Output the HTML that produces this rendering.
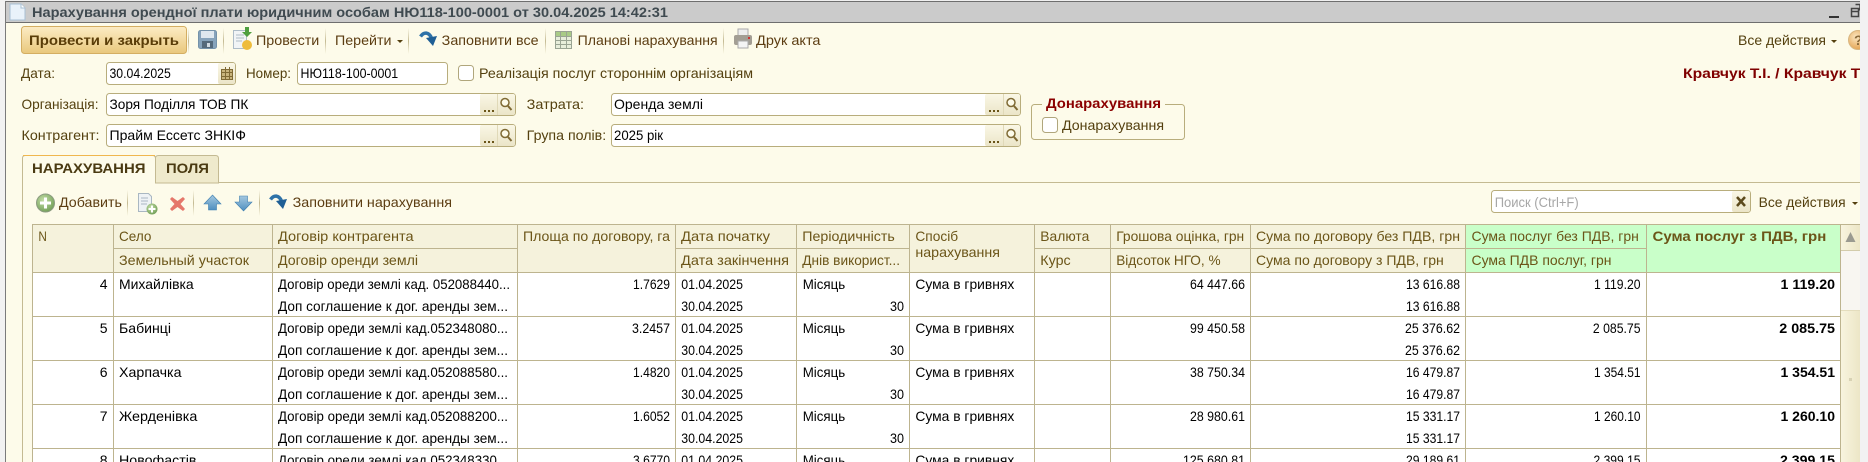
<!DOCTYPE html>
<html><head><meta charset="utf-8"><style>
html,body{margin:0;padding:0;background:#f2f2f2;width:1868px;height:462px;overflow:hidden}
svg{display:block}
text{font-family:"Liberation Sans","DejaVu Sans",sans-serif;font-size:14px;fill:#000;white-space:pre}
.l{fill:#54400f}.h{fill:#6b5518}.b{font-weight:bold}.tb{fill:#5c3d12}
</style></head><body>
<svg width="1868" height="462" viewBox="0 0 1868 462" xmlns="http://www.w3.org/2000/svg">
<defs>
<linearGradient id="btn" x1="0" y1="0" x2="0" y2="1"><stop offset="0" stop-color="#fcecc4"/><stop offset="1" stop-color="#e9c87c"/></linearGradient>
<linearGradient id="sep" x1="0" y1="0" x2="0" y2="1"><stop offset="0" stop-color="#c9c09a" stop-opacity="0"/><stop offset=".5" stop-color="#c4ba92"/><stop offset="1" stop-color="#c9c09a" stop-opacity="0"/></linearGradient>
<linearGradient id="ib" x1="0" y1="0" x2="0" y2="1"><stop offset="0" stop-color="#faf7e6"/><stop offset="1" stop-color="#ebe5c8"/></linearGradient>
<linearGradient id="sc" x1="0" y1="0" x2="1" y2="0"><stop offset="0" stop-color="#f8f4df"/><stop offset="1" stop-color="#ece6c6"/></linearGradient>
<linearGradient id="bl" x1="0" y1="0" x2="0" y2="1"><stop offset="0" stop-color="#a5c8df"/><stop offset="1" stop-color="#4f8fc0"/></linearGradient>
<radialGradient id="gr" cx=".4" cy=".35" r=".7"><stop offset="0" stop-color="#c5dfa8"/><stop offset="1" stop-color="#6f9d55"/></radialGradient>
<radialGradient id="og" cx=".4" cy=".35" r=".7"><stop offset="0" stop-color="#fbe6c0"/><stop offset="1" stop-color="#e3a14e"/></radialGradient>
<clipPath id="win"><rect x="0" y="0" width="1860" height="462"/></clipPath>
</defs>

<!-- window -->
<rect x="6" y="2" width="1854" height="460" fill="#fdfbea"/>
<rect x="5" y="0" width="1855" height="1" fill="#f0f0f0"/>
<rect x="5" y="1" width="1855" height="1" fill="#6e6e6e"/>
<rect x="6" y="2" width="1854" height="20" fill="#cbcbcb"/>
<rect x="6" y="22" width="1854" height="1" fill="#6e6e6e"/>
<rect x="5" y="1" width="1" height="461" fill="#7b7b7b"/>

<!-- title -->
<path d="M10 4h11l4 4v12H10z" fill="#e9f2fa" stroke="#a9c0d4"/>
<path d="M21 4v4h4" fill="#fff" stroke="#a9c0d4"/>
<text x="32" y="17" class="b" style="fill:#3f4a50" textLength="636" lengthAdjust="spacingAndGlyphs">Нарахування орендної плати юридичним особам НЮ118-100-0001 от 30.04.2025 14:42:31</text>
<rect x="1829" y="16" width="10" height="2" fill="#333"/>
<path d="M1855.500 4.500h4.500v6M1851.500 8.500h7v8h-7zM1851.500 11.500h7" fill="none" stroke="#444" stroke-width="1.500"/>

<!-- toolbar -->
<rect x="21.500" y="26.500" width="165" height="27" rx="3" fill="url(#btn)" stroke="#d4ae62"/>
<text x="29" y="45" class="b" style="fill:#5a3d08" textLength="150" lengthAdjust="spacingAndGlyphs">Провести и закрыть</text>
<rect x="188" y="28" width="1" height="26" fill="url(#sep)"/>
<rect x="223" y="28" width="1" height="26" fill="url(#sep)"/>
<rect x="325" y="28" width="1" height="26" fill="url(#sep)"/>
<rect x="408" y="28" width="1" height="26" fill="url(#sep)"/>
<rect x="545" y="28" width="1" height="26" fill="url(#sep)"/>
<rect x="723" y="28" width="1" height="26" fill="url(#sep)"/>
<!-- save -->
<rect x="198.500" y="30.500" width="18" height="18" rx="2" fill="#86a3bb" stroke="#7492a9"/>
<rect x="201" y="31" width="13" height="7" fill="#dfe8ef"/>
<rect x="202" y="41" width="11" height="7" fill="#54697a"/><rect x="207" y="43" width="3" height="4" fill="#cfd9e1"/>
<!-- post -->
<path d="M233.500 30.500h13v18h-13z" fill="#f1f4f6" stroke="#aebcc7"/>
<path d="M236 35h8M236 38h8M236 41h6" stroke="#aebcc7"/>
<ellipse cx="247" cy="45" rx="5" ry="5" fill="#eebc3c"/>
<path d="M245 27h4v5h3l-5 5-5-5h3z" fill="#4f9f3f"/>
<text x="256" y="45" class="tb" textLength="63.300" lengthAdjust="spacingAndGlyphs">Провести</text>
<text x="335" y="45" class="tb" textLength="56.500" lengthAdjust="spacingAndGlyphs">Перейти</text>
<path d="M397 40h6l-3 3z" fill="#54400f"/>
<!-- arrow -->
<path d="M420.500 36.500C424 31.500 429 32 431.500 38" fill="none" stroke="#2e72a8" stroke-width="3.500"/>
<path d="M426 38l11-2-4 10z" fill="#1f5f95"/>
<text x="441.700" y="45" class="tb" textLength="96.900" lengthAdjust="spacingAndGlyphs">Заповнити все</text>
<!-- table icon -->
<rect x="555.500" y="31.500" width="16" height="17" fill="#e8eedb" stroke="#9aa493"/>
<rect x="556" y="32" width="15" height="4" fill="#a9cb86"/>
<path d="M556 36.500h15M556 40.500h15M556 44.500h15M560.500 32v16M566.500 32v16" stroke="#9aa493"/>
<text x="577.700" y="45" class="tb" textLength="140" lengthAdjust="spacingAndGlyphs">Планові нарахування</text>
<!-- printer -->
<rect x="738" y="29" width="10" height="7" fill="#eee" stroke="#aaa"/>
<rect x="734" y="35" width="18" height="10" rx="2" fill="#a39e94"/>
<rect x="738" y="41" width="10" height="7" fill="#f4f4f4" stroke="#aaa"/>
<rect x="748" y="37" width="2" height="2" fill="#c33"/>
<text x="756" y="45" class="tb" textLength="64.500" lengthAdjust="spacingAndGlyphs">Друк акта</text>
<text x="1738" y="45" class="l" textLength="88" lengthAdjust="spacingAndGlyphs">Все действия</text>
<path d="M1831 40h6l-3 3z" fill="#54400f"/>
<g clip-path="url(#win)"><circle cx="1858" cy="40" r="9.500" fill="url(#og)" stroke="#d8b680"/>
<text x="1854" y="45" style="fill:#8a6a3a;font-weight:bold">?</text>
<text x="1683" y="78" class="b" style="fill:#7f0000" textLength="177.400" lengthAdjust="spacingAndGlyphs">Кравчук Т.І. / Кравчук Т</text></g>

<!-- form row 1 -->
<text x="21" y="78" class="l" textLength="34" lengthAdjust="spacingAndGlyphs">Дата:</text>
<rect x="106.500" y="62.500" width="129" height="22" rx="3" fill="#fff" stroke="#b8ad7c"/>
<rect x="218" y="63" width="17" height="21" rx="2" fill="url(#ib)"/>
<path d="M221.500 69.500h11v10h-11zM221.500 72.500h11M221.500 76.500h11M225.500 67v13M229.500 67v13" fill="#c8b47c" stroke="#7f6a34"/>
<text x="109.500" y="78" textLength="61.300" lengthAdjust="spacingAndGlyphs">30.04.2025</text>
<text x="246" y="78" class="l" textLength="45" lengthAdjust="spacingAndGlyphs">Номер:</text>
<rect x="297.500" y="62.500" width="150" height="22" rx="3" fill="#fff" stroke="#b8ad7c"/>
<text x="300.500" y="78" textLength="97.700" lengthAdjust="spacingAndGlyphs">НЮ118-100-0001</text>
<rect x="458.500" y="65.500" width="15" height="15" rx="3" fill="#fff" stroke="#b0a67c"/>
<text x="479" y="78" class="l" textLength="274" lengthAdjust="spacingAndGlyphs">Реалізація послуг стороннім організаціям</text>

<!-- org -->
<text x="21.500" y="109" class="l" textLength="77" lengthAdjust="spacingAndGlyphs">Організація:</text>
<rect x="106.500" y="93.500" width="409" height="22" rx="3" fill="#fff" stroke="#b8ad7c"/>
<rect x="480" y="94" width="35" height="21" rx="2" fill="url(#ib)"/><rect x="497" y="94" width="1" height="21" fill="#e0d9b8"/>
<path d="M484 111h2M488 111h2M492 111h2" stroke="#6b5518" stroke-width="2"/>
<circle cx="505" cy="102.500" r="4" fill="#fdfbea" stroke="#7f6a34" stroke-width="1.500"/><path d="M508 106l3.500 4" stroke="#7f6a34" stroke-width="2"/>
<text x="109.500" y="109" textLength="138.800" lengthAdjust="spacingAndGlyphs">Зоря Поділля ТОВ ПК</text>
<text x="526.700" y="109" class="l" textLength="57.300" lengthAdjust="spacingAndGlyphs">Затрата:</text>
<rect x="611.500" y="93.500" width="409" height="22" rx="3" fill="#fff" stroke="#b8ad7c"/>
<rect x="985" y="94" width="35" height="21" rx="2" fill="url(#ib)"/><rect x="1003" y="94" width="1" height="21" fill="#e0d9b8"/>
<path d="M989 111h2M993 111h2M997 111h2" stroke="#6b5518" stroke-width="2"/>
<circle cx="1011" cy="102.500" r="4" fill="#fdfbea" stroke="#7f6a34" stroke-width="1.500"/><path d="M1014 106l3.500 4" stroke="#7f6a34" stroke-width="2"/>
<text x="614" y="109" textLength="89" lengthAdjust="spacingAndGlyphs">Оренда землі</text>

<!-- contr -->
<text x="21.500" y="140" class="l" textLength="78" lengthAdjust="spacingAndGlyphs">Контрагент:</text>
<rect x="106.500" y="124.500" width="409" height="22" rx="3" fill="#fff" stroke="#b8ad7c"/>
<rect x="480" y="125" width="35" height="21" rx="2" fill="url(#ib)"/><rect x="497" y="125" width="1" height="21" fill="#e0d9b8"/>
<path d="M484 142h2M488 142h2M492 142h2" stroke="#6b5518" stroke-width="2"/>
<circle cx="505" cy="133.500" r="4" fill="#fdfbea" stroke="#7f6a34" stroke-width="1.500"/><path d="M508 137l3.500 4" stroke="#7f6a34" stroke-width="2"/>
<text x="109.500" y="140" textLength="136.400" lengthAdjust="spacingAndGlyphs">Прайм Ессетс ЗНКІФ</text>
<text x="526.700" y="140" class="l" textLength="79.500" lengthAdjust="spacingAndGlyphs">Група полів:</text>
<rect x="611.500" y="124.500" width="409" height="22" rx="3" fill="#fff" stroke="#b8ad7c"/>
<rect x="985" y="125" width="35" height="21" rx="2" fill="url(#ib)"/><rect x="1003" y="125" width="1" height="21" fill="#e0d9b8"/>
<path d="M989 142h2M993 142h2M997 142h2" stroke="#6b5518" stroke-width="2"/>
<circle cx="1011" cy="133.500" r="4" fill="#fdfbea" stroke="#7f6a34" stroke-width="1.500"/><path d="M1014 137l3.500 4" stroke="#7f6a34" stroke-width="2"/>
<text x="614" y="140" textLength="49" lengthAdjust="spacingAndGlyphs">2025 рік</text>

<!-- group -->
<rect x="1031.500" y="104.500" width="153" height="35" rx="3" fill="none" stroke="#b8ad7c"/>
<rect x="1042" y="100" width="123" height="9" fill="#fdfbea"/>
<text x="1046" y="108" class="b" style="fill:#8b0000" textLength="115" lengthAdjust="spacingAndGlyphs">Донарахування</text>
<rect x="1042.500" y="117.500" width="15" height="15" rx="3" fill="#fff" stroke="#b0a67c"/>
<text x="1062" y="130" class="l" textLength="102" lengthAdjust="spacingAndGlyphs">Донарахування</text>

<!-- tabs -->
<rect x="22" y="182" width="1838" height="1" fill="#c4ba92"/>
<rect x="22" y="182" width="1" height="280" fill="#c4ba92"/>
<path d="M155.500 183v-25q0-2.500 3-2.500h57q3 0 3 3v24.500z" fill="#efeacc" stroke="#c4ba92"/>
<path d="M22.500 183v-25q0-2.500 3-2.500h127q3 0 3 3v24.500z" fill="#fdfbea" stroke="#c4ba92"/>
<rect x="23" y="181" width="132" height="3" fill="#fdfbea"/>
<rect x="23" y="155" width="132" height="1" fill="#f0b74e"/>
<text x="32" y="173" class="b" style="fill:#4a3a12" textLength="113.500" lengthAdjust="spacingAndGlyphs">НАРАХУВАННЯ</text>
<text x="166" y="173" class="b" style="fill:#4a3a12" textLength="43" lengthAdjust="spacingAndGlyphs">ПОЛЯ</text>

<!-- table toolbar -->
<circle cx="45.500" cy="203" r="9" fill="url(#gr)" stroke="#8b9b80"/>
<path d="M45.500 197.500v11M40 203h11" stroke="#fff" stroke-width="3"/>
<text x="59" y="207" class="tb" textLength="62.900" lengthAdjust="spacingAndGlyphs">Добавить</text>
<rect x="127" y="190" width="1" height="26" fill="url(#sep)"/>
<rect x="193" y="190" width="1" height="26" fill="url(#sep)"/>
<rect x="259" y="190" width="1" height="26" fill="url(#sep)"/>
<path d="M138.500 193.500h10l3 3v15h-13z" fill="#eef2f5" stroke="#a9b7c2"/>
<path d="M141 198h7M141 201h7M141 204h6" stroke="#a9b7c2"/>
<circle cx="152" cy="209" r="5.500" fill="url(#gr)"/><path d="M152 205.500v7M148.500 209h7" stroke="#fff" stroke-width="2"/>
<path d="M172 197l5.500 4 5.500-4 2 2-4.500 5 4.500 5-2 2-5.500-4-5.500 4-2-2 4.500-5-4.500-5z" fill="#e5776a"/>
<path d="M212.500 195l8.500 9h-4.500v6h-8v-6h-4.500z" fill="url(#bl)" stroke="#3f7fb0" stroke-width=".6"/>
<path d="M243.500 211l8.500-9h-4.500v-6h-8v6h-4.500z" fill="url(#bl)" stroke="#3f7fb0" stroke-width=".6"/>
<path d="M270.500 199.500C274 194.500 279 195 281.500 201" fill="none" stroke="#2e72a8" stroke-width="3.500"/>
<path d="M276 201l11-2-4 10z" fill="#1f5f95"/>
<text x="292.600" y="207" class="tb" textLength="159.400" lengthAdjust="spacingAndGlyphs">Заповнити нарахування</text>
<rect x="1491.500" y="190.500" width="259" height="22" rx="3" fill="#fff" stroke="#b8ad7c"/>
<rect x="1732" y="191" width="18" height="21" rx="2" fill="url(#ib)"/>
<path d="M1737 197l8 9M1745 197l-8 9" stroke="#5c4a1c" stroke-width="2.500"/>
<text x="1494.700" y="207" style="fill:#a7a7a7" textLength="84" lengthAdjust="spacingAndGlyphs">Поиск (Ctrl+F)</text>
<text x="1758.600" y="207" class="l" textLength="87" lengthAdjust="spacingAndGlyphs">Все действия</text>
<path d="M1852 202h6l-3 3z" fill="#54400f"/>

<!-- table -->
<rect x="32" y="224" width="1809" height="48" fill="#f5f2dc"/>
<rect x="1465" y="224" width="376" height="48" fill="#c9ffc9"/>
<rect x="32" y="272" width="1809" height="190" fill="#fff"/>
<g fill="#bdb48f">
<rect x="32" y="224" width="1829" height="1"/>
<rect x="32" y="272" width="1809" height="1"/>
<rect x="32" y="316" width="1809" height="1"/>
<rect x="32" y="360" width="1809" height="1"/>
<rect x="32" y="404" width="1809" height="1"/>
<rect x="32" y="448" width="1809" height="1"/>
<rect x="113" y="248" width="404" height="1"/>
<rect x="675" y="248" width="234" height="1"/>
<rect x="1034" y="248" width="612" height="1"/>
<rect x="32" y="224" width="1" height="238"/>
<rect x="113" y="224" width="1" height="238"/>
<rect x="272" y="224" width="1" height="238"/>
<rect x="517" y="224" width="1" height="238"/>
<rect x="675" y="224" width="1" height="238"/>
<rect x="796" y="224" width="1" height="238"/>
<rect x="909" y="224" width="1" height="238"/>
<rect x="1034" y="224" width="1" height="238"/>
<rect x="1110" y="224" width="1" height="238"/>
<rect x="1250" y="224" width="1" height="238"/>
<rect x="1465" y="224" width="1" height="238"/>
<rect x="1646" y="224" width="1" height="238"/>
<rect x="1840" y="224" width="1" height="238"/>
</g>

<!-- header -->
<g class="h">
<text x="38.400" y="241" class="h" textLength="8.500" lengthAdjust="spacingAndGlyphs">N</text>
<text x="119" y="241" class="h" textLength="32.400" lengthAdjust="spacingAndGlyphs">Село</text>
<text x="119" y="265" class="h" textLength="130" lengthAdjust="spacingAndGlyphs">Земельный участок</text>
<text x="278" y="241" class="h" textLength="135.600" lengthAdjust="spacingAndGlyphs">Договір контрагента</text>
<text x="278" y="265" class="h" textLength="140" lengthAdjust="spacingAndGlyphs">Договір оренди землі</text>
<text x="523" y="241" class="h" textLength="147" lengthAdjust="spacingAndGlyphs">Площа по договору, га</text>
<text x="681" y="241" class="h" textLength="89" lengthAdjust="spacingAndGlyphs">Дата початку</text>
<text x="681" y="265" class="h" textLength="108" lengthAdjust="spacingAndGlyphs">Дата закінчення</text>
<text x="802.300" y="241" class="h" textLength="92.500" lengthAdjust="spacingAndGlyphs">Періодичність</text>
<text x="802.300" y="265" class="h" textLength="97.700" lengthAdjust="spacingAndGlyphs">Днів використ...</text>
<text x="915.400" y="241" class="h" textLength="42.700" lengthAdjust="spacingAndGlyphs">Спосіб</text>
<text x="915.400" y="257" class="h" textLength="84.600" lengthAdjust="spacingAndGlyphs">нарахування</text>
<text x="1040.300" y="241" class="h" textLength="49" lengthAdjust="spacingAndGlyphs">Валюта</text>
<text x="1040.300" y="265" class="h" textLength="30.400" lengthAdjust="spacingAndGlyphs">Курс</text>
<text x="1116.200" y="241" class="h" textLength="128" lengthAdjust="spacingAndGlyphs">Грошова оцінка, грн</text>
<text x="1116.200" y="265" class="h" textLength="104.400" lengthAdjust="spacingAndGlyphs">Відсоток НГО, %</text>
<text x="1256" y="241" class="h" textLength="204" lengthAdjust="spacingAndGlyphs">Сума по договору без ПДВ, грн</text>
<text x="1256" y="265" class="h" textLength="187.800" lengthAdjust="spacingAndGlyphs">Сума по договору з ПДВ, грн</text>
<text x="1471.500" y="241" class="h" textLength="167.400" lengthAdjust="spacingAndGlyphs">Сума послуг без ПДВ, грн</text>
<text x="1471.500" y="265" class="h" textLength="140" lengthAdjust="spacingAndGlyphs">Сума ПДВ послуг, грн</text>
<text x="1652.500" y="241" class="h b" textLength="173.800" lengthAdjust="spacingAndGlyphs">Сума послуг з ПДВ, грн</text>
</g>

<!-- row 4 -->
<text x="107.500" y="289" text-anchor="end">4</text>
<text x="119" y="289" textLength="74.700" lengthAdjust="spacingAndGlyphs">Михайлівка</text>
<text x="278" y="289" textLength="232" lengthAdjust="spacingAndGlyphs">Договір ореди землі кад. 052088440...</text>
<text x="278" y="311" textLength="230" lengthAdjust="spacingAndGlyphs">Доп соглашение к дог. аренды зем...</text>
<text x="670" y="289" text-anchor="end" textLength="37" lengthAdjust="spacingAndGlyphs">1.7629</text>
<text x="681.300" y="289" textLength="61.700" lengthAdjust="spacingAndGlyphs">01.04.2025</text>
<text x="681.300" y="311" textLength="61.700" lengthAdjust="spacingAndGlyphs">30.04.2025</text>
<text x="802.700" y="289" textLength="42.500" lengthAdjust="spacingAndGlyphs">Місяць</text>
<text x="904" y="311" text-anchor="end" textLength="14" lengthAdjust="spacingAndGlyphs">30</text>
<text x="915.400" y="289" textLength="98.900" lengthAdjust="spacingAndGlyphs">Сума в гривнях</text>
<text x="1245" y="289" text-anchor="end" textLength="55" lengthAdjust="spacingAndGlyphs">64 447.66</text>
<text x="1460" y="289" text-anchor="end" textLength="54" lengthAdjust="spacingAndGlyphs">13 616.88</text>
<text x="1460" y="311" text-anchor="end" textLength="54" lengthAdjust="spacingAndGlyphs">13 616.88</text>
<text x="1640.500" y="289" text-anchor="end" textLength="46.500" lengthAdjust="spacingAndGlyphs">1 119.20</text>
<text x="1835" y="289" text-anchor="end" class="b" textLength="54.500" lengthAdjust="spacingAndGlyphs">1 119.20</text>

<!-- row 5 -->
<text x="107.500" y="333" text-anchor="end">5</text>
<text x="119" y="333" textLength="52" lengthAdjust="spacingAndGlyphs">Бабинці</text>
<text x="278" y="333" textLength="230" lengthAdjust="spacingAndGlyphs">Договір ореди землі кад.052348080...</text>
<text x="278" y="355" textLength="230" lengthAdjust="spacingAndGlyphs">Доп соглашение к дог. аренды зем...</text>
<text x="670" y="333" text-anchor="end" textLength="38" lengthAdjust="spacingAndGlyphs">3.2457</text>
<text x="681.300" y="333" textLength="61.700" lengthAdjust="spacingAndGlyphs">01.04.2025</text>
<text x="681.300" y="355" textLength="61.700" lengthAdjust="spacingAndGlyphs">30.04.2025</text>
<text x="802.700" y="333" textLength="42.500" lengthAdjust="spacingAndGlyphs">Місяць</text>
<text x="904" y="355" text-anchor="end" textLength="14" lengthAdjust="spacingAndGlyphs">30</text>
<text x="915.400" y="333" textLength="98.900" lengthAdjust="spacingAndGlyphs">Сума в гривнях</text>
<text x="1245" y="333" text-anchor="end" textLength="55" lengthAdjust="spacingAndGlyphs">99 450.58</text>
<text x="1460" y="333" text-anchor="end" textLength="55" lengthAdjust="spacingAndGlyphs">25 376.62</text>
<text x="1460" y="355" text-anchor="end" textLength="55" lengthAdjust="spacingAndGlyphs">25 376.62</text>
<text x="1640.500" y="333" text-anchor="end" textLength="47.600" lengthAdjust="spacingAndGlyphs">2 085.75</text>
<text x="1835" y="333" text-anchor="end" class="b" textLength="55.700" lengthAdjust="spacingAndGlyphs">2 085.75</text>

<!-- row 6 -->
<text x="107.500" y="377" text-anchor="end">6</text>
<text x="119" y="377" textLength="62.500" lengthAdjust="spacingAndGlyphs">Харпачка</text>
<text x="278" y="377" textLength="230" lengthAdjust="spacingAndGlyphs">Договір ореди землі кад.052088580...</text>
<text x="278" y="399" textLength="230" lengthAdjust="spacingAndGlyphs">Доп соглашение к дог. аренды зем...</text>
<text x="670" y="377" text-anchor="end" textLength="37" lengthAdjust="spacingAndGlyphs">1.4820</text>
<text x="681.300" y="377" textLength="61.700" lengthAdjust="spacingAndGlyphs">01.04.2025</text>
<text x="681.300" y="399" textLength="61.700" lengthAdjust="spacingAndGlyphs">30.04.2025</text>
<text x="802.700" y="377" textLength="42.500" lengthAdjust="spacingAndGlyphs">Місяць</text>
<text x="904" y="399" text-anchor="end" textLength="14" lengthAdjust="spacingAndGlyphs">30</text>
<text x="915.400" y="377" textLength="98.900" lengthAdjust="spacingAndGlyphs">Сума в гривнях</text>
<text x="1245" y="377" text-anchor="end" textLength="55" lengthAdjust="spacingAndGlyphs">38 750.34</text>
<text x="1460" y="377" text-anchor="end" textLength="54" lengthAdjust="spacingAndGlyphs">16 479.87</text>
<text x="1460" y="399" text-anchor="end" textLength="54" lengthAdjust="spacingAndGlyphs">16 479.87</text>
<text x="1640.500" y="377" text-anchor="end" textLength="46.500" lengthAdjust="spacingAndGlyphs">1 354.51</text>
<text x="1835" y="377" text-anchor="end" class="b" textLength="54.500" lengthAdjust="spacingAndGlyphs">1 354.51</text>

<!-- row 7 -->
<text x="107.500" y="421" text-anchor="end">7</text>
<text x="119" y="421" textLength="78.300" lengthAdjust="spacingAndGlyphs">Жерденівка</text>
<text x="278" y="421" textLength="230" lengthAdjust="spacingAndGlyphs">Договір ореди землі кад.052088200...</text>
<text x="278" y="443" textLength="230" lengthAdjust="spacingAndGlyphs">Доп соглашение к дог. аренды зем...</text>
<text x="670" y="421" text-anchor="end" textLength="37" lengthAdjust="spacingAndGlyphs">1.6052</text>
<text x="681.300" y="421" textLength="61.700" lengthAdjust="spacingAndGlyphs">01.04.2025</text>
<text x="681.300" y="443" textLength="61.700" lengthAdjust="spacingAndGlyphs">30.04.2025</text>
<text x="802.700" y="421" textLength="42.500" lengthAdjust="spacingAndGlyphs">Місяць</text>
<text x="904" y="443" text-anchor="end" textLength="14" lengthAdjust="spacingAndGlyphs">30</text>
<text x="915.400" y="421" textLength="98.900" lengthAdjust="spacingAndGlyphs">Сума в гривнях</text>
<text x="1245" y="421" text-anchor="end" textLength="55" lengthAdjust="spacingAndGlyphs">28 980.61</text>
<text x="1460" y="421" text-anchor="end" textLength="54" lengthAdjust="spacingAndGlyphs">15 331.17</text>
<text x="1460" y="443" text-anchor="end" textLength="54" lengthAdjust="spacingAndGlyphs">15 331.17</text>
<text x="1640.500" y="421" text-anchor="end" textLength="46.500" lengthAdjust="spacingAndGlyphs">1 260.10</text>
<text x="1835" y="421" text-anchor="end" class="b" textLength="54.500" lengthAdjust="spacingAndGlyphs">1 260.10</text>

<!-- row 8 -->
<text x="107.500" y="465" text-anchor="end">8</text>
<text x="119" y="465" textLength="77.500" lengthAdjust="spacingAndGlyphs">Новофастів</text>
<text x="278" y="465" textLength="230" lengthAdjust="spacingAndGlyphs">Договір ореди землі кад.052348330...</text>
<text x="670" y="465" text-anchor="end" textLength="37" lengthAdjust="spacingAndGlyphs">3.6770</text>
<text x="681.300" y="465" textLength="61.700" lengthAdjust="spacingAndGlyphs">01.04.2025</text>
<text x="802.700" y="465" textLength="42.500" lengthAdjust="spacingAndGlyphs">Місяць</text>
<text x="915.400" y="465" textLength="98.900" lengthAdjust="spacingAndGlyphs">Сума в гривнях</text>
<text x="1245" y="465" text-anchor="end" textLength="62" lengthAdjust="spacingAndGlyphs">125 680.81</text>
<text x="1460" y="465" text-anchor="end" textLength="54" lengthAdjust="spacingAndGlyphs">29 189.61</text>
<text x="1640.500" y="465" text-anchor="end" textLength="47" lengthAdjust="spacingAndGlyphs">2 399.15</text>
<text x="1835" y="465" text-anchor="end" class="b" textLength="55" lengthAdjust="spacingAndGlyphs">2 399.15</text>

<!-- scrollbar -->
<rect x="1841" y="225" width="19" height="26" fill="url(#sc)"/>
<rect x="1841" y="250" width="19" height="1" fill="#d3ccab"/>
<path d="M1850.500 232l5 10h-10z" fill="#9a9a90"/>
<rect x="1841" y="251" width="19" height="59" fill="#f8f6f1"/>
<rect x="1841" y="310" width="19" height="152" fill="url(#sc)"/>
<rect x="1841" y="310" width="19" height="1" fill="#e4ddbd"/>
<rect x="1849" y="378" width="3" height="3" fill="#d8d2b4"/>
<rect x="1860" y="0" width="8" height="462" fill="#f2f2f2"/>
</svg>
</body></html>
